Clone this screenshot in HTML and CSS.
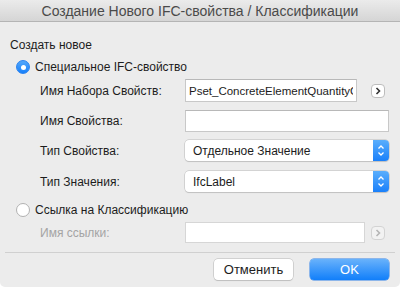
FILE: index.html
```html
<!DOCTYPE html>
<html lang="ru">
<head>
    <meta charset="UTF-8">
    <title>Создание Нового IFC-свойства / Классификации</title>
    <link rel="stylesheet" href="styles.css">
</head>
<body>
    <div class="window">
        <div class="titlebar">Создание Нового IFC-свойства / Классификации</div>
        <div class="content">
            <div class="heading">Создать новое</div>

            <div class="radio-row">
                <span class="radio checked"></span>
                <span>Специальное IFC-свойство</span>
            </div>

            <div class="field row1">
                <label for="psetName">Имя Набора Свойств:</label>
                <input class="input short" id="psetName" type="text" value="Pset_ConcreteElementQuantityGeneral" readonly>
                <span class="arrow-btn">
                    <svg width="6" height="8" viewBox="0 0 6 8"><path d="M1.5 1 L4.5 4 L1.5 7" fill="none" stroke="#333" stroke-width="1.6"/></svg>
                </span>
            </div>

            <div class="field row2">
                <label for="propName">Имя Свойства:</label>
                <input class="input" id="propName" type="text">
            </div>

            <div class="field row3">
                <label>Тип Свойства:</label>
                <div class="select">
                    <span class="select-text">Отдельное Значение</span>
                    <span class="select-arrows">
                        <svg width="8" height="13" viewBox="0 0 8 13"><path d="M1.5 4.5 L4 2 L6.5 4.5 M1.5 8.5 L4 11 L6.5 8.5" fill="none" stroke="#fff" stroke-width="1.3"/></svg>
                    </span>
                </div>
            </div>

            <div class="field row4">
                <label>Тип Значения:</label>
                <div class="select">
                    <span class="select-text">IfcLabel</span>
                    <span class="select-arrows">
                        <svg width="8" height="13" viewBox="0 0 8 13"><path d="M1.5 4.5 L4 2 L6.5 4.5 M1.5 8.5 L4 11 L6.5 8.5" fill="none" stroke="#fff" stroke-width="1.3"/></svg>
                    </span>
                </div>
            </div>

            <div class="radio-row second">
                <span class="radio"></span>
                <span>Ссылка на Классификацию</span>
            </div>

            <div class="field row5 disabled">
                <label for="refName">Имя ссылки:</label>
                <input class="input short" id="refName" type="text" disabled>
                <span class="arrow-btn">
                    <svg width="6" height="8" viewBox="0 0 6 8"><path d="M1.5 1 L4.5 4 L1.5 7" fill="none" stroke="#b5b5b5" stroke-width="1.6"/></svg>
                </span>
            </div>

            <div class="separator"></div>

            <div class="buttons">
                <button class="btn cancel">Отменить</button>
                <button class="btn ok">OK</button>
            </div>
        </div>
    </div>
</body>
</html>
```

FILE: styles.css
```css
body {
    margin: 0;
    padding: 0;
    background: #ffffff;
    font-family: "Liberation Sans", Arial, sans-serif;
    font-size: 12px;
    color: #1c1c1c;
}

.window {
    width: 400px;
    height: 287px;
    background: #ececec;
    border-radius: 0 0 5px 5px;
    overflow: hidden;
}

.titlebar {
    height: 21px;
    line-height: 22px;
    text-align: center;
    font-size: 14px;
    color: #4a4a4a;
    background: linear-gradient(#ebebeb, #d5d5d5);
    border-bottom: 1px solid #b4b4b4;
}

.content {
    padding: 0 11px 0 10px;
}

.heading {
    margin-top: 15px;
    height: 16px;
    line-height: 16px;
}

.radio-row {
    margin-top: 6px;
    height: 16px;
    display: flex;
    align-items: center;
    gap: 5px;
    padding-left: 6px;
}

.radio-row.second {
    margin-top: 10px;
}

.radio {
    width: 14px;
    height: 14px;
    border-radius: 50%;
    box-sizing: border-box;
    background: #fff;
    border: 1px solid #b1b1b1;
    display: flex;
    align-items: center;
    justify-content: center;
}

.radio.checked {
    background: linear-gradient(#53a7fb, #1780fa);
    border-color: #2a83f0;
}

.radio.checked::after {
    content: "";
    width: 5px;
    height: 5px;
    border-radius: 50%;
    background: #fff;
}

.field {
    display: flex;
    align-items: center;
    padding-left: 30px;
}

.field label {
    width: 145px;
    flex-shrink: 0;
}

.row1 { margin-top: 4px; height: 23px; }
.row2 { margin-top: 8px; height: 22px; }
.row3 { margin-top: 8px; height: 21px; }
.row4 { margin-top: 10px; height: 21px; }
.row5 { margin-top: 4px; height: 21px; }

.input {
    box-sizing: border-box;
    height: 100%;
    width: 204px;
    margin: 0;
    background: #fff;
    border: 1px solid #c8c8c8;
    border-top-color: #b8b8b8;
    border-radius: 0;
    padding: 0 3px;
    font-family: "Liberation Sans", Arial, sans-serif;
    font-size: 11.5px;
    color: #1c1c1c;
    outline: none;
}

.input.short {
    width: 172px;
}

.row5 .input.short {
    width: 180px;
}

.arrow-btn {
    box-sizing: border-box;
    width: 14px;
    height: 14px;
    margin-left: 14px;
    border-radius: 4px;
    background: #fff;
    border: 1px solid #bdbdbd;
    display: flex;
    align-items: center;
    justify-content: center;
}

.row5 .arrow-btn {
    margin-left: 6px;
}

.select {
    box-sizing: border-box;
    width: 204px;
    height: 100%;
    background: #fff;
    border-radius: 4px;
    box-shadow: 0 0 0 0.5px #b9b9b9, 0 1px 1px rgba(0, 0, 0, 0.15);
    display: flex;
    align-items: center;
    overflow: hidden;
}

.select-text {
    flex: 1;
    padding-left: 8px;
}

.select-arrows {
    width: 16px;
    height: 100%;
    background: linear-gradient(#5aaefc, #1a80fa);
    display: flex;
    align-items: center;
    justify-content: center;
}

.disabled label {
    color: #a4a4a4;
}

.disabled .input {
    background: #fff;
    border-color: #d6d6d6;
}

.disabled .arrow-btn {
    background: #f2f2f2;
    border-color: #d3d3d3;
}

.separator {
    margin: 9px -6px 0 -5px;
    height: 1px;
    background: #d0d0d0;
}

.buttons {
    margin-top: 6px;
    display: flex;
    justify-content: flex-end;
    gap: 17px;
}

.btn {
    font-family: "Liberation Sans", Arial, sans-serif;
    font-size: 13px;
    height: 21px;
    width: 79px;
    border-radius: 4px;
    padding: 0;
    border: none;
}

.cancel {
    background: #fff;
    color: #1c1c1c;
    box-shadow: 0 0 0 0.5px #b5b5b5, 0 1px 1px rgba(0, 0, 0, 0.15);
}

.ok {
    background: linear-gradient(#69b2fb, #117ffa);
    color: #fff;
    box-shadow: 0 0 0 0.5px #2f80e8;
}
```
